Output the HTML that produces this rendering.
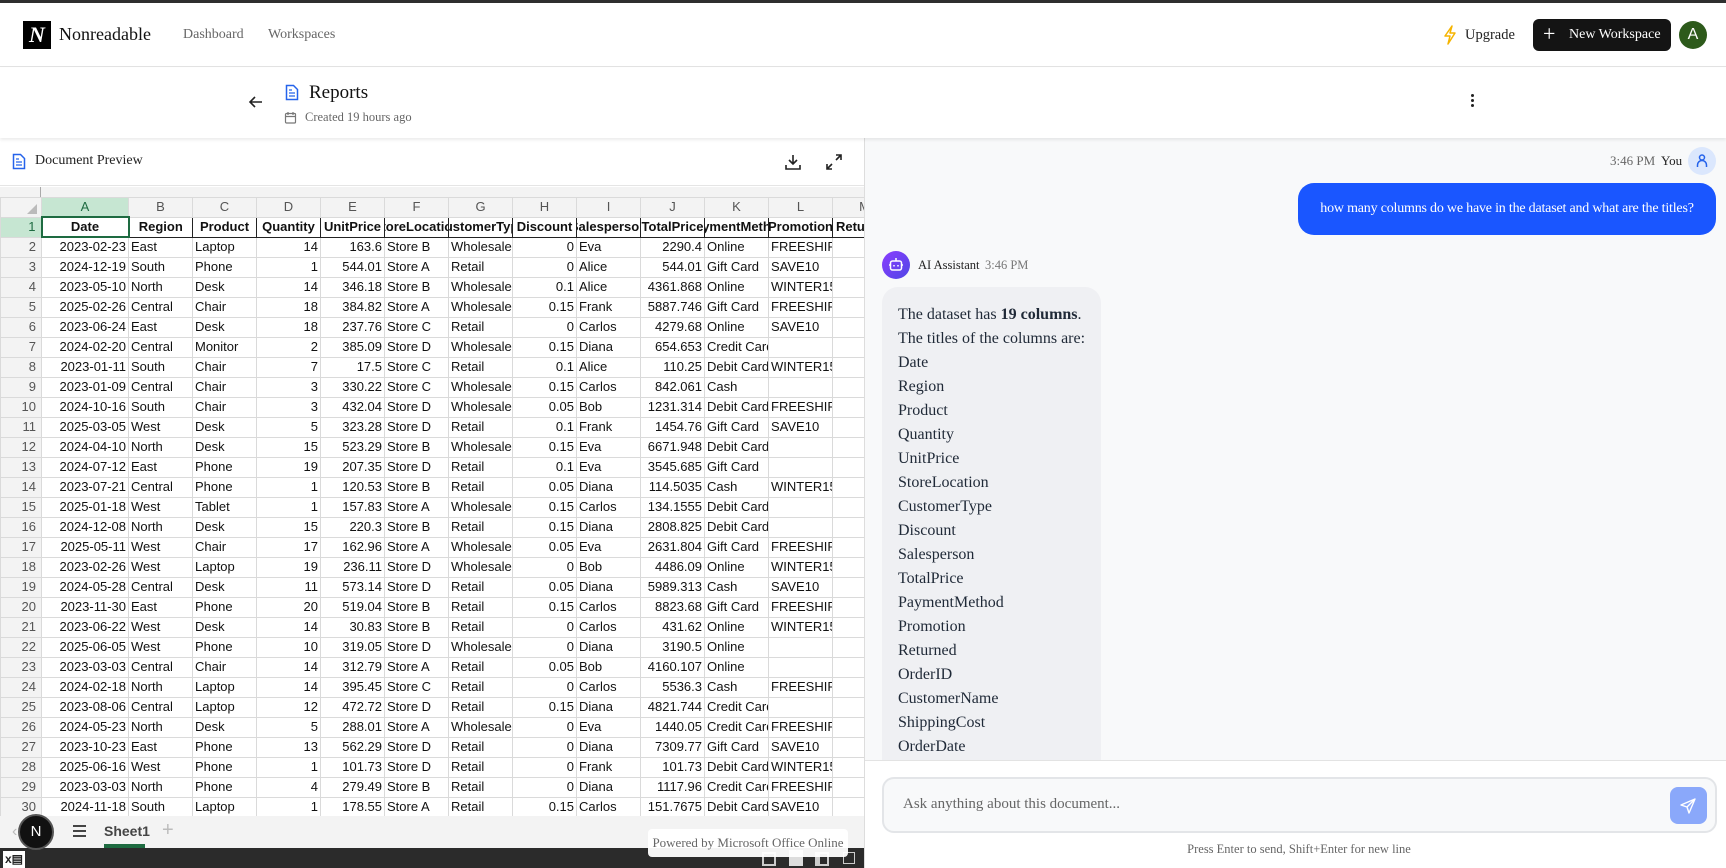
<!DOCTYPE html>
<html><head><meta charset="utf-8"><style>
*{box-sizing:border-box;margin:0;padding:0}
body{width:1726px;height:868px;overflow:hidden;background:#fff;font-family:"Liberation Serif",serif;color:#111;position:relative}
.abs{position:absolute}
#topbar{left:0;top:0;width:1726px;height:3px;background:#2f2f2f}
#nav{left:0;top:3px;width:1726px;height:64px;border-bottom:1px solid #e2e2e2;background:#fff}
#hdr{left:0;top:68px;width:1726px;height:70px;background:#fff;box-shadow:0 2px 3px rgba(0,0,0,.08);z-index:2}
#left{left:0;top:138px;width:864px;height:730px;background:#fff;overflow:hidden}
#right{left:864px;top:138px;width:862px;height:730px;background:#f8f9fa;border-left:1px solid #ddd;overflow:hidden}
.grid{position:absolute;left:0;top:197px;border-collapse:collapse;table-layout:fixed;font-family:"Liberation Sans",sans-serif;font-size:13px;color:#111}
.grid td,.grid th{height:20px;border:1px solid #dadada;white-space:nowrap;overflow:hidden;padding:0 2px;font-weight:normal;line-height:18px}
.grid th{background:#f3f3f3;color:#555;text-align:right;padding-right:5px}
.grid tr.ch th{height:19px;text-align:center;padding:0;color:#555}
.grid tr.h1 td{border:1px solid #222;font-weight:bold;padding:0}
.grid tr.h1 td div{display:flex;justify-content:center}
.grid tr.h1 td span{flex-shrink:0}
.r{text-align:right}
.ans div{height:24px;line-height:24px}
</style></head><body>
<div class="abs" id="topbar"></div>
<div class="abs" id="nav">
  <div class="abs" style="left:23px;top:18px;width:28px;height:28px;background:#000;color:#fff;font-weight:bold;font-style:italic;font-size:22px;line-height:28px;text-align:center">N</div>
  <div class="abs" style="left:59px;top:21px;font-size:18px;color:#111">Nonreadable</div>
  <div class="abs" style="left:183px;top:24px;font-size:14px;color:#666">Dashboard</div>
  <div class="abs" style="left:268px;top:24px;font-size:14px;color:#666">Workspaces</div>
  <svg class="abs" style="left:1442px;top:22px" width="16" height="20" viewBox="0 0 16 20"><path d="M10 1 L3 11 H8 L6 19 L13 8 H8 Z" fill="none" stroke="#f5b400" stroke-width="1.5" stroke-linejoin="round"/></svg>
  <div class="abs" style="left:1465px;top:24px;font-size:14.5px;color:#222">Upgrade</div>
  <div class="abs" style="left:1533px;top:16px;width:138px;height:32px;background:#141414;border-radius:6px;color:#fff;font-size:14px;line-height:32px"><span style="position:absolute;left:10px;top:-1px;font-size:22px">+</span><span style="position:absolute;left:36px">New Workspace</span></div>
  <div class="abs" style="left:1679px;top:18px;width:28px;height:28px;border-radius:50%;background:#2d5a1b;color:#fff;font-family:'Liberation Sans',sans-serif;font-size:16px;line-height:28px;text-align:center">A</div>
</div>
<div class="abs" id="hdr">
  <svg class="abs" style="left:248px;top:26px" width="16" height="16" viewBox="0 0 16 16"><path d="M14 8H2M7 3L2 8l5 5" fill="none" stroke="#222" stroke-width="1.6"/></svg>
  <svg class="abs" style="left:285px;top:16px" width="14" height="17" viewBox="0 0 14 17"><path d="M1.5 1.5h7l4 4v10h-11z" fill="none" stroke="#2563eb" stroke-width="1.5"/><path d="M4 9h6M4 12h6M4 6h3" stroke="#2563eb" stroke-width="1.3"/></svg>
  <div class="abs" style="left:309px;top:14px;font-size:19px;color:#111">Reports</div>
  <svg class="abs" style="left:284px;top:43px" width="13" height="13" viewBox="0 0 13 13"><rect x="1.5" y="2.5" width="10" height="9.5" rx="1" fill="none" stroke="#777" stroke-width="1.2"/><path d="M1.5 5.5h10M4 1v3M9 1v3" stroke="#777" stroke-width="1.2"/></svg>
  <div class="abs" style="left:305px;top:42px;font-size:12.5px;color:#666">Created 19 hours ago</div>
  <div class="abs" style="left:1471px;top:26px;width:3px;height:3px;border-radius:50%;background:#222;box-shadow:0 5px 0 #222,0 10px 0 #222"></div>
</div>

<div class="abs" id="left">
  <div class="abs" style="left:0;top:0;width:864px;height:48px;border-bottom:1px solid #e5e5e5">
    <svg class="abs" style="left:12px;top:15px" width="14" height="17" viewBox="0 0 14 17"><path d="M1.5 1.5h7l4 4v10h-11z" fill="none" stroke="#2563eb" stroke-width="1.5"/><path d="M4 9h6M4 12h6M4 6h3" stroke="#2563eb" stroke-width="1.3"/></svg>
    <div class="abs" style="left:35px;top:15px;font-size:14px;color:#222">Document Preview</div>
    <svg class="abs" style="left:784px;top:15px" width="18" height="18" viewBox="0 0 18 18"><path d="M9 2v9M5 7l4 4 4-4M2 12v4h14v-4" fill="none" stroke="#222" stroke-width="1.6"/></svg>
    <svg class="abs" style="left:826px;top:16px" width="16" height="16" viewBox="0 0 16 16"><path d="M10 1h5v5M15 1l-5 5M6 15H1v-5M1 15l5-5" fill="none" stroke="#222" stroke-width="1.6"/></svg>
  </div>
  <div class="abs" style="left:0;top:49px;width:864px;height:11px;background:#f3f3f3"></div>
  <div class="abs" style="left:40px;top:49px;width:1px;height:11px;background:#aaa"></div>
</div>
<div style="position:absolute;left:0;top:0;width:864px;height:868px;overflow:hidden;z-index:1">
<table class="grid" style="width:960px;top:197px">
<colgroup><col style="width:41px"><col style="width:87px"><col style="width:64px"><col style="width:64px"><col style="width:64px"><col style="width:64px"><col style="width:64px"><col style="width:64px"><col style="width:64px"><col style="width:64px"><col style="width:64px"><col style="width:64px"><col style="width:64px"><col style="width:64px"><col style="width:64px"></colgroup>
<tr class="ch"><th style="background:#f3f3f3"><svg width="14" height="12" style="float:right;margin:4px 2px 0 0"><path d="M12 1V11H2Z" fill="#bbb"/></svg></th><th style="background:#c6e6d2;color:#1e6b41">A</th><th>B</th><th>C</th><th>D</th><th>E</th><th>F</th><th>G</th><th>H</th><th>I</th><th>J</th><th>K</th><th>L</th><th>M</th><th>N</th></tr>
<tr class="h1"><th style="background:#c6e6d2;color:#1e6b41;border-color:#dadada">1</th><td style="border:2px solid #1e6b41"><div><span>Date</span></div></td><td><div><span>Region</span></div></td><td><div><span>Product</span></div></td><td><div><span>Quantity</span></div></td><td><div><span>UnitPrice</span></div></td><td><div><span>StoreLocation</span></div></td><td><div><span>CustomerType</span></div></td><td><div><span>Discount</span></div></td><td><div><span>Salesperson</span></div></td><td><div><span>TotalPrice</span></div></td><td><div><span>PaymentMethod</span></div></td><td><div><span>Promotion</span></div></td><td><div><span>Returned</span></div></td><td></td></tr>
<tr><th>2</th><td class="r">2023-02-23</td><td>East</td><td>Laptop</td><td class="r">14</td><td class="r">163.6</td><td>Store B</td><td>Wholesale</td><td class="r">0</td><td>Eva</td><td class="r">2290.4</td><td>Online</td><td>FREESHIP</td><td></td><td></td></tr>
<tr><th>3</th><td class="r">2024-12-19</td><td>South</td><td>Phone</td><td class="r">1</td><td class="r">544.01</td><td>Store A</td><td>Retail</td><td class="r">0</td><td>Alice</td><td class="r">544.01</td><td>Gift Card</td><td>SAVE10</td><td></td><td></td></tr>
<tr><th>4</th><td class="r">2023-05-10</td><td>North</td><td>Desk</td><td class="r">14</td><td class="r">346.18</td><td>Store B</td><td>Wholesale</td><td class="r">0.1</td><td>Alice</td><td class="r">4361.868</td><td>Online</td><td>WINTER15</td><td></td><td></td></tr>
<tr><th>5</th><td class="r">2025-02-26</td><td>Central</td><td>Chair</td><td class="r">18</td><td class="r">384.82</td><td>Store A</td><td>Wholesale</td><td class="r">0.15</td><td>Frank</td><td class="r">5887.746</td><td>Gift Card</td><td>FREESHIP</td><td></td><td></td></tr>
<tr><th>6</th><td class="r">2023-06-24</td><td>East</td><td>Desk</td><td class="r">18</td><td class="r">237.76</td><td>Store C</td><td>Retail</td><td class="r">0</td><td>Carlos</td><td class="r">4279.68</td><td>Online</td><td>SAVE10</td><td></td><td></td></tr>
<tr><th>7</th><td class="r">2024-02-20</td><td>Central</td><td>Monitor</td><td class="r">2</td><td class="r">385.09</td><td>Store D</td><td>Wholesale</td><td class="r">0.15</td><td>Diana</td><td class="r">654.653</td><td>Credit Card</td><td></td><td></td><td></td></tr>
<tr><th>8</th><td class="r">2023-01-11</td><td>South</td><td>Chair</td><td class="r">7</td><td class="r">17.5</td><td>Store C</td><td>Retail</td><td class="r">0.1</td><td>Alice</td><td class="r">110.25</td><td>Debit Card</td><td>WINTER15</td><td></td><td></td></tr>
<tr><th>9</th><td class="r">2023-01-09</td><td>Central</td><td>Chair</td><td class="r">3</td><td class="r">330.22</td><td>Store C</td><td>Wholesale</td><td class="r">0.15</td><td>Carlos</td><td class="r">842.061</td><td>Cash</td><td></td><td></td><td></td></tr>
<tr><th>10</th><td class="r">2024-10-16</td><td>South</td><td>Chair</td><td class="r">3</td><td class="r">432.04</td><td>Store D</td><td>Wholesale</td><td class="r">0.05</td><td>Bob</td><td class="r">1231.314</td><td>Debit Card</td><td>FREESHIP</td><td></td><td></td></tr>
<tr><th>11</th><td class="r">2025-03-05</td><td>West</td><td>Desk</td><td class="r">5</td><td class="r">323.28</td><td>Store D</td><td>Retail</td><td class="r">0.1</td><td>Frank</td><td class="r">1454.76</td><td>Gift Card</td><td>SAVE10</td><td></td><td></td></tr>
<tr><th>12</th><td class="r">2024-04-10</td><td>North</td><td>Desk</td><td class="r">15</td><td class="r">523.29</td><td>Store B</td><td>Wholesale</td><td class="r">0.15</td><td>Eva</td><td class="r">6671.948</td><td>Debit Card</td><td></td><td></td><td></td></tr>
<tr><th>13</th><td class="r">2024-07-12</td><td>East</td><td>Phone</td><td class="r">19</td><td class="r">207.35</td><td>Store D</td><td>Retail</td><td class="r">0.1</td><td>Eva</td><td class="r">3545.685</td><td>Gift Card</td><td></td><td></td><td></td></tr>
<tr><th>14</th><td class="r">2023-07-21</td><td>Central</td><td>Phone</td><td class="r">1</td><td class="r">120.53</td><td>Store B</td><td>Retail</td><td class="r">0.05</td><td>Diana</td><td class="r">114.5035</td><td>Cash</td><td>WINTER15</td><td></td><td></td></tr>
<tr><th>15</th><td class="r">2025-01-18</td><td>West</td><td>Tablet</td><td class="r">1</td><td class="r">157.83</td><td>Store A</td><td>Wholesale</td><td class="r">0.15</td><td>Carlos</td><td class="r">134.1555</td><td>Debit Card</td><td></td><td></td><td></td></tr>
<tr><th>16</th><td class="r">2024-12-08</td><td>North</td><td>Desk</td><td class="r">15</td><td class="r">220.3</td><td>Store B</td><td>Retail</td><td class="r">0.15</td><td>Diana</td><td class="r">2808.825</td><td>Debit Card</td><td></td><td></td><td></td></tr>
<tr><th>17</th><td class="r">2025-05-11</td><td>West</td><td>Chair</td><td class="r">17</td><td class="r">162.96</td><td>Store A</td><td>Wholesale</td><td class="r">0.05</td><td>Eva</td><td class="r">2631.804</td><td>Gift Card</td><td>FREESHIP</td><td></td><td></td></tr>
<tr><th>18</th><td class="r">2023-02-26</td><td>West</td><td>Laptop</td><td class="r">19</td><td class="r">236.11</td><td>Store D</td><td>Wholesale</td><td class="r">0</td><td>Bob</td><td class="r">4486.09</td><td>Online</td><td>WINTER15</td><td></td><td></td></tr>
<tr><th>19</th><td class="r">2024-05-28</td><td>Central</td><td>Desk</td><td class="r">11</td><td class="r">573.14</td><td>Store D</td><td>Retail</td><td class="r">0.05</td><td>Diana</td><td class="r">5989.313</td><td>Cash</td><td>SAVE10</td><td></td><td></td></tr>
<tr><th>20</th><td class="r">2023-11-30</td><td>East</td><td>Phone</td><td class="r">20</td><td class="r">519.04</td><td>Store B</td><td>Retail</td><td class="r">0.15</td><td>Carlos</td><td class="r">8823.68</td><td>Gift Card</td><td>FREESHIP</td><td></td><td></td></tr>
<tr><th>21</th><td class="r">2023-06-22</td><td>West</td><td>Desk</td><td class="r">14</td><td class="r">30.83</td><td>Store B</td><td>Retail</td><td class="r">0</td><td>Carlos</td><td class="r">431.62</td><td>Online</td><td>WINTER15</td><td></td><td></td></tr>
<tr><th>22</th><td class="r">2025-06-05</td><td>West</td><td>Phone</td><td class="r">10</td><td class="r">319.05</td><td>Store D</td><td>Wholesale</td><td class="r">0</td><td>Diana</td><td class="r">3190.5</td><td>Online</td><td></td><td></td><td></td></tr>
<tr><th>23</th><td class="r">2023-03-03</td><td>Central</td><td>Chair</td><td class="r">14</td><td class="r">312.79</td><td>Store A</td><td>Retail</td><td class="r">0.05</td><td>Bob</td><td class="r">4160.107</td><td>Online</td><td></td><td></td><td></td></tr>
<tr><th>24</th><td class="r">2024-02-18</td><td>North</td><td>Laptop</td><td class="r">14</td><td class="r">395.45</td><td>Store C</td><td>Retail</td><td class="r">0</td><td>Carlos</td><td class="r">5536.3</td><td>Cash</td><td>FREESHIP</td><td></td><td></td></tr>
<tr><th>25</th><td class="r">2023-08-06</td><td>Central</td><td>Laptop</td><td class="r">12</td><td class="r">472.72</td><td>Store D</td><td>Retail</td><td class="r">0.15</td><td>Diana</td><td class="r">4821.744</td><td>Credit Card</td><td></td><td></td><td></td></tr>
<tr><th>26</th><td class="r">2024-05-23</td><td>North</td><td>Desk</td><td class="r">5</td><td class="r">288.01</td><td>Store A</td><td>Wholesale</td><td class="r">0</td><td>Eva</td><td class="r">1440.05</td><td>Credit Card</td><td>FREESHIP</td><td></td><td></td></tr>
<tr><th>27</th><td class="r">2023-10-23</td><td>East</td><td>Phone</td><td class="r">13</td><td class="r">562.29</td><td>Store D</td><td>Retail</td><td class="r">0</td><td>Diana</td><td class="r">7309.77</td><td>Gift Card</td><td>SAVE10</td><td></td><td></td></tr>
<tr><th>28</th><td class="r">2025-06-16</td><td>West</td><td>Phone</td><td class="r">1</td><td class="r">101.73</td><td>Store D</td><td>Retail</td><td class="r">0</td><td>Frank</td><td class="r">101.73</td><td>Debit Card</td><td>WINTER15</td><td></td><td></td></tr>
<tr><th>29</th><td class="r">2023-03-03</td><td>North</td><td>Phone</td><td class="r">4</td><td class="r">279.49</td><td>Store B</td><td>Retail</td><td class="r">0</td><td>Diana</td><td class="r">1117.96</td><td>Credit Card</td><td>FREESHIP</td><td></td><td></td></tr>
<tr><th>30</th><td class="r">2024-11-18</td><td>South</td><td>Laptop</td><td class="r">1</td><td class="r">178.55</td><td>Store A</td><td>Retail</td><td class="r">0.15</td><td>Carlos</td><td class="r">151.7675</td><td>Debit Card</td><td>SAVE10</td><td></td><td></td></tr>
</table>
<div class="abs" style="left:0;top:816px;width:864px;height:32px;background:#f3f3f3;font-family:'Liberation Sans',sans-serif">
  <div class="abs" style="left:12px;top:7px;color:#bbb;font-size:16px">‹</div>
  <div class="abs" style="left:73px;top:14px;width:13px;height:2px;background:#444;box-shadow:0 -5px 0 #444,0 5px 0 #444"></div>
  <div class="abs" style="left:104px;top:7px;font-size:14px;font-weight:bold;color:#444">Sheet1</div>
  <div class="abs" style="left:104px;top:28px;width:41px;height:4px;background:#1e6b41"></div>
  <div class="abs" style="left:162px;top:3px;font-size:20px;color:#bbb">+</div>
</div>
<div class="abs" style="left:0;top:848px;width:864px;height:20px;background:#2b2b2b">
  <div class="abs" style="left:3px;top:3px;width:22px;height:17px;background:#fff;font-family:'Liberation Sans',sans-serif;font-size:12px;font-weight:bold;color:#222;line-height:17px;padding-left:2px">x▤</div>
  <div class="abs" style="left:762px;top:4px;width:14px;height:14px;border:2px solid #ccc"></div>
  <div class="abs" style="left:789px;top:2px;width:14px;height:16px;background:#ddd"></div>
  <div class="abs" style="left:815px;top:4px;width:14px;height:14px;border:2px solid #ccc;border-left-width:5px"></div>
  <div class="abs" style="left:843px;top:4px;width:12px;height:12px;border:1.5px solid #ccc"></div>
</div>
<div class="abs" style="left:648px;top:829px;width:200px;height:28px;background:rgba(255,255,255,.95);border-radius:4px;font-size:13px;color:#666;text-align:center;line-height:28px">Powered by Microsoft Office Online</div>
<div class="abs" style="left:18px;top:814px;width:36px;height:36px;border-radius:50%;background:#111;border:2px solid #555;color:#fff;font-family:'Liberation Sans',sans-serif;font-size:15px;text-align:center;line-height:32px">N</div>
</div>

<div class="abs" id="right">
  <div class="abs" style="left:745px;top:15px;font-size:13px;color:#666">3:46 PM</div>
  <div class="abs" style="left:796px;top:15px;font-size:13px;color:#222">You</div>
  <div class="abs" style="left:823px;top:9px;width:28px;height:28px;border-radius:50%;background:#dbe7fd">
    <svg width="28" height="28" viewBox="0 0 28 28"><circle cx="14" cy="10.5" r="2.5" fill="none" stroke="#2563eb" stroke-width="1.5"/><path d="M9.5 20v-2a4.5 4.5 0 0 1 9 0v2" fill="none" stroke="#2563eb" stroke-width="1.5"/></svg>
  </div>
  <div class="abs" style="left:433px;top:45px;width:418px;height:52px;background:#1a56ff;border-radius:16px;color:#fff;font-size:14px;letter-spacing:-0.2px;line-height:52px;text-align:center">how many columns do we have in the dataset and what are the titles?</div>
  <div class="abs" style="left:17px;top:113px;width:28px;height:28px;border-radius:50%;background:linear-gradient(135deg,#8b3dff,#4f46e5)">
    <svg width="28" height="28" viewBox="0 0 28 28"><rect x="8.5" y="10" width="11" height="9" rx="2" fill="none" stroke="#fff" stroke-width="1.5"/><path d="M14 7v3M12 14v1.5M16 14v1.5M7 14h1.5M19.5 14H21" stroke="#fff" stroke-width="1.5"/></svg>
  </div>
  <div class="abs" style="left:53px;top:120px;font-size:12.5px;color:#222">AI Assistant</div>
  <div class="abs" style="left:120px;top:120px;font-size:12.5px;color:#777">3:46 PM</div>
  <div class="abs ans" style="left:17px;top:149px;width:219px;height:500px;background:#eff0f3;border-radius:16px;padding:16px 0 0 16px;font-size:16px;color:#1f2937">
    <div>The dataset has <b>19 columns</b>.</div>
    <div>The titles of the columns are:</div>
    <div>Date</div><div>Region</div><div>Product</div><div>Quantity</div><div>UnitPrice</div><div>StoreLocation</div><div>CustomerType</div><div>Discount</div><div>Salesperson</div><div>TotalPrice</div><div>PaymentMethod</div><div>Promotion</div><div>Returned</div><div>OrderID</div><div>CustomerName</div><div>ShippingCost</div><div>OrderDate</div>
  </div>
  <div class="abs" style="left:0;top:622px;width:862px;height:108px;background:#fff;border-top:1px solid #e3e3e3">
    <div class="abs" style="left:17px;top:16px;width:835px;height:56px;border:2px solid #e3e5e8;border-radius:12px;background:#f8f9fa">
      <div class="abs" style="left:19px;top:17px;font-size:15px;color:#666">Ask anything about this document...</div>
      <div class="abs" style="left:786px;top:8px;width:37px;height:37px;border-radius:8px;background:#8aa8fa">
        <svg width="37" height="37" viewBox="0 0 37 37"><path d="M25 12L11 18l6 2 2 6z M17 20l8-8" fill="none" stroke="#fff" stroke-width="1.4" stroke-linejoin="round"/></svg>
      </div>
    </div>
    <div class="abs" style="left:0;top:81px;width:868px;text-align:center;font-size:12.5px;color:#666">Press Enter to send, Shift+Enter for new line</div>
  </div>
</div>
</body></html>
